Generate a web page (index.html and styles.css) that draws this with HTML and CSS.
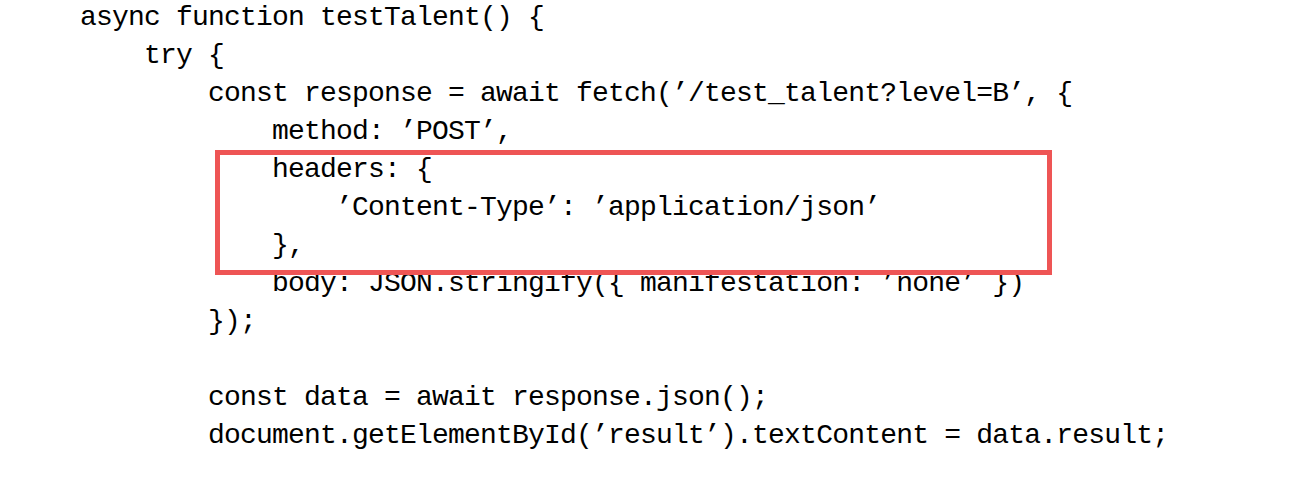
FILE: index.html
```html
<!DOCTYPE html>
<html>
<head>
<meta charset="utf-8">
<link rel="stylesheet" href="styles.css">
</head>
<body>
<div class="page">
<pre class="code">async function testTalent() {
    try {
        const response = await fetch(’/test_talent?level=B’, {
            method: ’POST’,
            headers: {
                ’Content-Type’: ’application/json’
            },
            body: JSON.stringify({ manifestation: ’none’ })
        });

        const data = await response.json();
        document.getElementById(’result’).textContent = data.result;</pre>
<div class="highlight"></div>
</div>
</body>
</html>
```
FILE: styles.css
```css
html, body {
  margin: 0;
  padding: 0;
  background: #ffffff;
}
.page {
  position: relative;
  width: 1291px;
  height: 492px;
  overflow: hidden;
}
.code {
  margin: 0;
  padding: 0 0 0 80px;
  font-family: "Liberation Mono", monospace;
  font-size: 28px;
  letter-spacing: -0.8px;
  line-height: 38px;
  color: #000;
  transform: translateY(-1px);
}
.highlight {
  position: absolute;
  left: 215px;
  top: 150px;
  width: 827px;
  height: 115px;
  border: 5px solid #ee5555;
}
```
